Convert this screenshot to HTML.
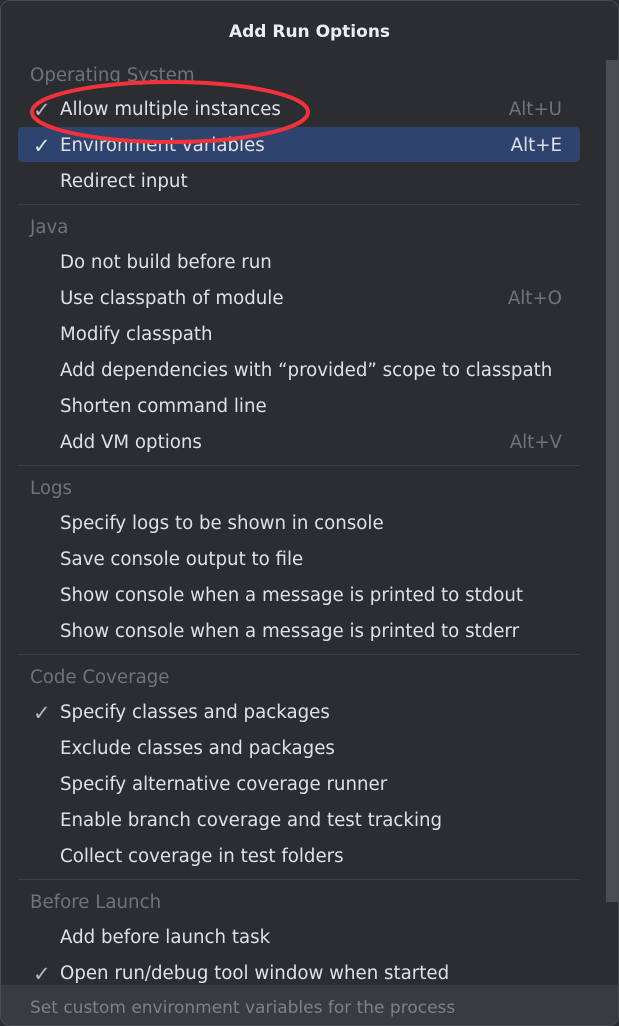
<!DOCTYPE html>
<html><head><meta charset="utf-8"><style>
*{margin:0;padding:0;box-sizing:border-box}
body{width:619px;height:1026px;background:#2b2d30;font-family:"DejaVu Sans",sans-serif;position:relative;overflow:hidden;color:#dfe1e5}
.frame{position:absolute;left:0;top:0;width:619px;height:1026px;border:1px solid #4a4c51;border-radius:10px}
.t{position:absolute;font-size:18.2px;white-space:nowrap;line-height:20px;margin-top:1px}
.h{color:#6f737a}
.k{color:#6f737a;right:57px}
.ck{position:absolute;left:33px;font-size:21px;line-height:20px;color:#b4b8bf;margin-top:1px}
.sep{position:absolute;left:18px;width:562px;height:1px;background:#3d3f43}
</style></head><body>
<div class="frame"></div>
<div style="position:absolute;left:606px;top:60px;width:12px;height:842px;background:#4b4d52"></div>
<div class="t" style="left:0;width:619px;text-align:center;top:21px;font-size:17px;font-weight:bold;color:#eceef2">Add Run Options</div>

<div style="position:absolute;left:18px;top:127px;width:562px;height:35px;background:#2e436e;border-radius:4px"></div>

<div class="t h" style="left:30px;top:65px">Operating System</div>
<div class="ck" style="top:99px">✓</div><div class="t" style="left:60px;top:99px">Allow multiple instances</div><div class="t k" style="top:99px">Alt+U</div>
<div class="ck" style="top:135px;color:#dfe1e5">✓</div><div class="t" style="left:60px;top:135px">Environment variables</div><div class="t" style="right:57px;top:135px">Alt+E</div>
<div class="t" style="left:60px;top:171px">Redirect input</div>
<div class="sep" style="top:204px"></div>

<div class="t h" style="left:30px;top:217px">Java</div>
<div class="t" style="left:60px;top:252px">Do not build before run</div>
<div class="t" style="left:60px;top:288px">Use classpath of module</div><div class="t k" style="top:288px">Alt+O</div>
<div class="t" style="left:60px;top:324px">Modify classpath</div>
<div class="t" style="left:60px;top:360px">Add dependencies with “provided” scope to classpath</div>
<div class="t" style="left:60px;top:396px">Shorten command line</div>
<div class="t" style="left:60px;top:432px">Add VM options</div><div class="t k" style="top:432px">Alt+V</div>
<div class="sep" style="top:465px"></div>

<div class="t h" style="left:30px;top:478px">Logs</div>
<div class="t" style="left:60px;top:513px">Specify logs to be shown in console</div>
<div class="t" style="left:60px;top:549px">Save console output to file</div>
<div class="t" style="left:60px;top:585px">Show console when a message is printed to stdout</div>
<div class="t" style="left:60px;top:621px">Show console when a message is printed to stderr</div>
<div class="sep" style="top:654px"></div>

<div class="t h" style="left:30px;top:667px">Code Coverage</div>
<div class="ck" style="top:702px">✓</div><div class="t" style="left:60px;top:702px">Specify classes and packages</div>
<div class="t" style="left:60px;top:738px">Exclude classes and packages</div>
<div class="t" style="left:60px;top:774px">Specify alternative coverage runner</div>
<div class="t" style="left:60px;top:810px">Enable branch coverage and test tracking</div>
<div class="t" style="left:60px;top:846px">Collect coverage in test folders</div>
<div class="sep" style="top:879px"></div>

<div class="t h" style="left:30px;top:892px">Before Launch</div>
<div class="t" style="left:60px;top:927px">Add before launch task</div>
<div class="ck" style="top:963px">✓</div><div class="t" style="left:60px;top:963px">Open run/debug tool window when started</div>

<div style="position:absolute;left:1px;top:985px;width:617px;height:40px;background:#393b40;border-radius:0 0 9px 9px"></div>
<div class="t h" style="left:30px;top:997px;font-size:17px;color:#7d8188">Set custom environment variables for the process</div>

<svg style="position:absolute;left:0;top:0" width="619" height="200"><ellipse cx="170" cy="112" rx="138" ry="30" fill="none" stroke="#f0323a" stroke-width="4"/></svg>
</body></html>
